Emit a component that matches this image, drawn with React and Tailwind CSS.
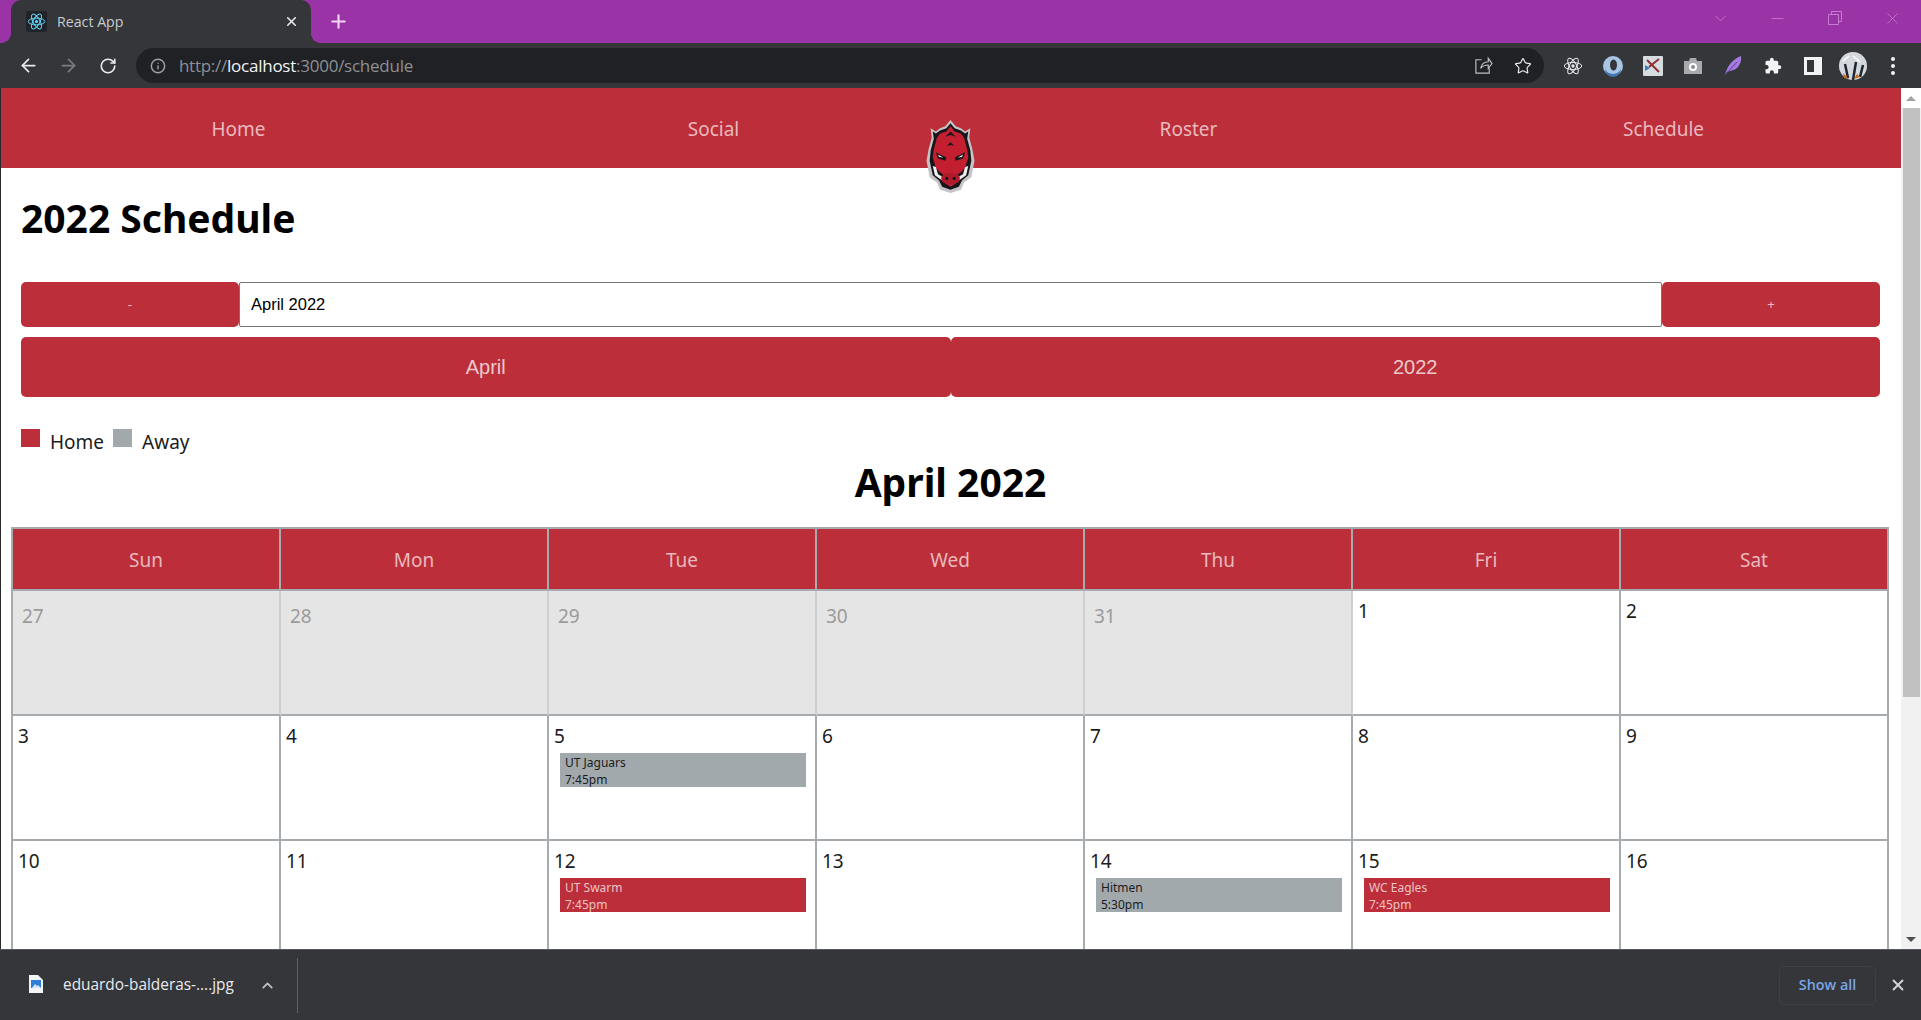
import { ArrowLeft, ArrowRight, ChevronDown, ChevronUp, Info, Minus, Plus, RotateCw, Star, X } from 'lucide-react'

const DAY_NAMES = ['Sun', 'Mon', 'Tue', 'Wed', 'Thu', 'Fri', 'Sat']

const WEEKS = [
  [
    { day: 27, muted: true },
    { day: 28, muted: true },
    { day: 29, muted: true },
    { day: 30, muted: true },
    { day: 31, muted: true },
    { day: 1 },
    { day: 2 },
  ],
  [
    { day: 3 },
    { day: 4 },
    { day: 5, game: { name: 'UT Jaguars', time: '7:45pm', home: false } },
    { day: 6 },
    { day: 7 },
    { day: 8 },
    { day: 9 },
  ],
  [
    { day: 10 },
    { day: 11 },
    { day: 12, game: { name: 'UT Swarm', time: '7:45pm', home: true } },
    { day: 13 },
    { day: 14, game: { name: 'Hitmen', time: '5:30pm', home: false } },
    { day: 15, game: { name: 'WC Eagles', time: '7:45pm', home: true } },
    { day: 16 },
  ],
]

function ReactIcon({ size = 22, color = '#61dafb' }) {
  return (
    <svg fill="none" height={size} stroke={color} strokeWidth="1.2" viewBox="0 0 24 24" width={size}>
      <circle cx="12" cy="12" fill={color} r="2" stroke="none" />
      <ellipse cx="12" cy="12" rx="10.5" ry="4.2" />
      <ellipse cx="12" cy="12" rx="10.5" ry="4.2" transform="rotate(60 12 12)" />
      <ellipse cx="12" cy="12" rx="10.5" ry="4.2" transform="rotate(120 12 12)" />
    </svg>
  )
}

function BoarLogo() {
  return (
    <svg height="73" viewBox="0 0 46 70" width="49">
      {/* grey outline */}
      <path d="M23 0l5 6 5 2 4 3 5-3-1 9 3 11 2 11-3 16-7 5-3 7-10 3-10-3-3-7-7-5-3-16 2-11 3-11-1-9 5 3 4-3 5-2z" fill="#c4c4c6" />
      {/* black body */}
      <path d="M23 3l4 5 6 2 4 3 3-2-1 7 3 11 1 10-3 14-6 5-3 6-8 3-8-3-3-6-6-5-3-14 1-10 3-11-1-7 3 2 4-3 6-2z" fill="#17171b" />
      {/* red face */}
      <path d="M23 6l4 5 6 2 3 4 3 11 1 8-3 10-4 4-3 2 1 7-8 5-8-5 1-7-3-2-4-4-3-10 1-8 3-11 3-4 6-2z" fill="#c41f30" />
      {/* forehead chevrons */}
      <path d="M23 11l5 5-5-1.500-5 1.500zM23 21l3.500 4-3.500-1-3.500 1z" fill="#17171b" />
      {/* brow and eyes */}
      <path d="M9 31l10 5-1 3-7-2zM37 31l-10 5 1 3 7-2z" fill="#17171b" />
      <path d="M11 33l5 3-4-.5zM35 33l-5 3 4-.5z" fill="#e6e6e6" />
      {/* tusks */}
      <path d="M6 44l2 9 7 5 1-3-5-3-2-7zM40 44l-2 9-7 5-1-3 5-3 2-7z" fill="#f0f0f0" />
      {/* snout */}
      <ellipse cx="23" cy="56" fill="#b01a2a" rx="9" ry="5.500" />
      <circle cx="19.500" cy="56" fill="#17171b" r="1.500" />
      <circle cx="26.500" cy="56" fill="#17171b" r="1.500" />
      <path d="M16 63q7 3 14 0" fill="none" stroke="#17171b" strokeWidth="1" />
    </svg>
  )
}

function ExtensionIcons() {
  return (
    <div className="flex items-center">
      <div className="flex w-10 justify-center">
        <ReactIcon color="#e8eaed" size={20} />
      </div>
      <div className="flex w-10 justify-center">
        <svg height="22" viewBox="0 0 22 22" width="22">
          <circle cx="11" cy="11" fill="#a8c6e4" r="10" />
          <ellipse cx="11.500" cy="10" fill="#35363a" rx="3.500" ry="5.500" />
          <path d="M3 14a9 9 0 0 0 16 0 8 8 0 0 1-16 0z" fill="#3f76b3" />
        </svg>
      </div>
      <div className="flex w-10 justify-center">
        <svg height="20" viewBox="0 0 20 20" width="20">
          <rect fill="#d5dde0" height="20" rx="1" width="20" />
          <path d="M4 4l12 12M16 3L6 11" fill="none" stroke="#8f2e36" strokeWidth="2" />
          <path d="M2 9l5 3-5 3z" fill="#3c7fb5" />
        </svg>
      </div>
      <div className="flex w-10 justify-center">
        <svg height="20" viewBox="0 0 20 20" width="20">
          <path d="M1 5h5l1-3h6l1 3h5v13H1z" fill="#a8aaad" />
          <circle cx="10" cy="11" fill="#fff" r="4" />
          <circle cx="10" cy="11" fill="#8a8c90" r="2" />
        </svg>
      </div>
      <div className="flex w-10 justify-center">
        <svg height="22" viewBox="0 0 22 22" width="22">
          <path d="M3 20C5 11 11 4 19 1c1 7-3 14-11 15l-3 1z" fill="#a67be0" />
          <path d="M3 20L15 7" stroke="#5b3c91" strokeWidth="1" />
        </svg>
      </div>
      <div className="flex w-10 justify-center">
        <svg fill="#f1f3f4" height="18" viewBox="0 0 24 24" width="18">
          <path d="M20.5 11H19V7a2 2 0 0 0-2-2h-4V3.500a2.500 2.500 0 0 0-5 0V5H4a2 2 0 0 0-2 2v3.800h1.500a2.700 2.700 0 0 1 0 5.400H2V20a2 2 0 0 0 2 2h3.800v-1.500a2.700 2.700 0 0 1 5.400 0V22H17a2 2 0 0 0 2-2v-4h1.500a2.500 2.500 0 0 0 0-5z" />
        </svg>
      </div>
      <div className="flex w-10 justify-center">
        <div className="flex h-[18px] w-[18px] justify-end border-[3px] border-[#f1f3f4] bg-[#35363a]">
          <div className="w-[5px] bg-[#f1f3f4]" />
        </div>
      </div>
      <div className="flex w-10 justify-center">
        <svg height="28" viewBox="0 0 28 28" width="28">
          <circle cx="14" cy="14" fill="#d3d8df" r="14" />
          <path d="M9 26L6 12M14 28l3-18M21 25l3-12" fill="none" stroke="#22262c" strokeWidth="2.500" />
          <path d="M4 21l6 6-5-1zM15 27l6-2-3-3z" fill="#c46a1c" />
          <path d="M4 9l6-5M14 4l7 6" fill="none" stroke="#f4f5f7" strokeWidth="2" />
        </svg>
      </div>
      <div className="flex w-10 flex-col items-center gap-[3px]">
        <span className="h-[4px] w-[4px] rounded-full bg-[#f1f3f4]" />
        <span className="h-[4px] w-[4px] rounded-full bg-[#f1f3f4]" />
        <span className="h-[4px] w-[4px] rounded-full bg-[#f1f3f4]" />
      </div>
    </div>
  )
}

function BrowserTop() {
  return (
    <div className="font-['Open_Sans',sans-serif]">
      <div className="flex h-[43px] items-end bg-[#9a33a5] pl-[11px]">
        <div className="relative flex h-[43px] w-[300px] items-center rounded-t-[10px] bg-[#35363a] pl-[15px] pr-[12px]">
          <span className="absolute bottom-0 left-[-10px] h-[10px] w-[10px] bg-[radial-gradient(circle_at_0_0,transparent_10px,#35363a_10px)]" />
          <span className="absolute bottom-0 right-[-10px] h-[10px] w-[10px] bg-[radial-gradient(circle_at_100%_0,transparent_10px,#35363a_10px)]" />
          <div className="flex h-[21px] w-[21px] items-center justify-center rounded-[3px] bg-[#20232a]">
            <ReactIcon size={19} />
          </div>
          <span className="ml-[10px] text-[14.2px] text-[#c9cbcf]">React App</span>
          <X className="ml-auto text-[#e8eaed]" size={15} strokeWidth={2.5} />
        </div>
        <div className="flex h-[43px] items-center pl-[17px]">
          <Plus className="text-[#f0d5f2]" size={21} strokeWidth={2.5} />
        </div>
        <div className="ml-auto flex h-[36px] items-center self-start text-[#c47fcc]">
          <ChevronDown size={19} strokeWidth={1} />
          <Minus className="ml-[38px]" size={19} strokeWidth={1} />
          <svg className="ml-[41px]" fill="none" height="14" stroke="currentColor" viewBox="0 0 14 14" width="14">
            <path d="M.5 3.500h10v10H.5zM3.500 3.500v-3h10v10h-3" />
          </svg>
          <X className="ml-[41px] mr-[19px]" size={19} strokeWidth={1} />
        </div>
      </div>
      <div className="flex h-[45px] items-center bg-[#35363a] pl-[8px] pr-[8px]">
        <div className="flex w-[122px] items-center text-[#e8eaed]">
          <div className="flex w-10 justify-center">
            <ArrowLeft size={21} strokeWidth={2} />
          </div>
          <div className="flex w-10 justify-center text-[#7b7c7f]">
            <ArrowRight size={21} strokeWidth={2} />
          </div>
          <div className="flex w-10 justify-center">
            <RotateCw size={18} strokeWidth={2.2} />
          </div>
        </div>
        <div className="ml-[6px] flex h-[35px] w-[1409px] items-center rounded-full bg-[#202124] pl-[14px] pr-[12px]">
          <Info className="text-[#9aa0a6]" size={16} strokeWidth={2.2} />
          <span className="ml-[13px] text-[17px] tracking-[-0.25px] text-[#8d9094]">
            http://<span className="text-[#f1f3f4]">localhost</span>:3000/schedule
          </span>
          <svg className="ml-auto text-[#bdc1c6]" fill="none" height="19" stroke="currentColor" strokeWidth="1.2" viewBox="0 0 20 20" width="19">
            <path d="M8 4H2v14h14v-5M7 13c1-5 4-7 8-7V2.500l4 5.500-4 5V9.500c-3 0-6 1-8 3.500z" />
          </svg>
          <Star className="ml-[21px] text-[#e8eaed]" size={18} strokeWidth={1.6} />
        </div>
        <div className="ml-[9px]">
          <ExtensionIcons />
        </div>
      </div>
    </div>
  )
}

function NavBar() {
  return (
    <nav className="relative grid h-[80px] grid-cols-4 bg-[#bc2f3a] pt-[3px] text-[19px] text-[#e9b9be]">
      <a className="flex items-center justify-center" href="#home">Home</a>
      <a className="flex items-center justify-center" href="#social">Social</a>
      <a className="flex items-center justify-center" href="#roster">Roster</a>
      <a className="flex items-center justify-center" href="#schedule">Schedule</a>
      <div className="absolute left-[925px] top-[32px]">
        <BoarLogo />
      </div>
    </nav>
  )
}

function DayCell({ cell }) {
  return (
    <div className={`h-[125px] border-b-2 border-r-2 border-b-[#a5abae] ${cell.muted ? 'border-r-[#ced1d2] bg-[#e5e5e5] pl-[9px] pt-[12px] text-[#9b9b9b]' : 'border-r-[#a5abae] bg-white pl-[5px] pt-[7px] text-[#1c1c1c]'}`}>
      <div className="text-[19px] leading-[26px]">{cell.day}</div>
      {cell.game && (
        <div className={`ml-[6px] mr-[9px] mt-[4px] h-[34px] pl-[5px] pt-[1px] text-[12px] leading-[17px] ${cell.game.home ? 'bg-[#bc2f3a] text-[#ecc3c7]' : 'bg-[#a2a9ad] text-[#1c1c1c]'}`}>
          <div>{cell.game.name}</div>
          <div>{cell.game.time}</div>
        </div>
      )}
    </div>
  )
}

function SchedulePage() {
  return (
    <div className="h-full min-w-0 flex-1 overflow-hidden border-l border-[#2a2a2a] bg-white">
      <NavBar />
      <div className="pl-[20px] pr-[21px]">
        <h1 className="mb-[14px] flex h-[100px] items-center text-[39px] font-bold text-black">2022 Schedule</h1>

        <div className="flex h-[45px] font-['Liberation_Sans',sans-serif]">
          <button className="w-[218px] rounded-[5px] bg-[#bc2f3a] text-[13px] text-[#e9b9be]" type="button">-</button>
          <input
            className="min-w-0 flex-1 rounded-[2px] border border-[#767676] pl-[11px] text-[16.5px] text-black"
            defaultValue="April 2022"
            readOnly
          />
          <button className="w-[218px] rounded-[5px] bg-[#bc2f3a] text-[13px] text-[#e9b9be]" type="button">+</button>
        </div>
        <div className="mt-[10px] flex h-[60px] font-['Liberation_Sans',sans-serif] text-[20px] text-[#ecc8cb]">
          <button className="flex-1 rounded-[5px] bg-[#bc2f3a]" type="button">April</button>
          <button className="flex-1 rounded-[5px] bg-[#bc2f3a]" type="button">2022</button>
        </div>

        <div className="mt-[32px] flex h-[29px] items-start text-[19px] text-[#1c1c1c]">
          <span className="h-[18px] w-[19px] bg-[#bc2f3a]" />
          <span className="ml-[10px] mr-[9px] leading-[26px]">Home</span>
          <span className="h-[18px] w-[19px] bg-[#a2a9ad]" />
          <span className="ml-[10px] leading-[26px]">Away</span>
        </div>
        <h2 className="mb-[21px] flex h-[48px] items-center justify-center text-[39px] font-bold text-black">April 2022</h2>
      </div>

      <div className="ml-[10px] mr-[12px] grid grid-cols-7 border-l-2 border-t-2 border-[#a5abae]">
        {DAY_NAMES.map((name) => (
          <div className="flex h-[62px] items-center justify-center border-b-2 border-r-2 border-[#a5abae] bg-[#bc2f3a] pt-[2px] text-[19px] text-[#e9b9be]" key={name}>
            {name}
          </div>
        ))}
        {WEEKS.flat().map((cell, index) => (
          <DayCell cell={cell} key={index} />
        ))}
      </div>
    </div>
  )
}

function ScrollBar() {
  return (
    <div className="flex h-full w-[20px] shrink-0 flex-col items-center bg-[#f1f1f1]">
      <div className="flex h-[20px] w-full items-center justify-center bg-white">
        <span className="h-0 w-0 border-x-[5px] border-b-[5px] border-x-transparent border-b-[#a3a3a3]" />
      </div>
      <div className="h-[589px] w-[17px] bg-[#c1c1c1]" />
      <div className="mt-auto flex h-[20px] w-full items-center justify-center">
        <span className="h-0 w-0 border-x-[5px] border-t-[5px] border-x-transparent border-t-[#505050]" />
      </div>
    </div>
  )
}

function DownloadBar() {
  return (
    <div className="flex h-[71px] shrink-0 items-center border-t border-[#55565a] bg-[#35363a] font-['Open_Sans',sans-serif]">
      <svg className="ml-[29px] mb-[3px]" height="18" viewBox="0 0 14 18" width="14">
        <path d="M0 0h9l5 5v13H0z" fill="#f1f3f4" />
        <rect fill="#2f7fd6" height="8" width="10" x="2" y="5" />
        <path d="M3 13l3-4 2 2 1-1 3 3z" fill="#d5e6f8" />
      </svg>
      <span className="ml-[20px] mb-[1px] text-[15.4px] text-[#e8eaed]">eduardo-balderas-....jpg</span>
      <ChevronUp className="ml-[25px] text-[#bdc1c6]" size={17} strokeWidth={2.5} />
      <div className="ml-[21px] h-[55px] w-px bg-[#5f6064]" />
      <button className="ml-auto flex h-[39px] w-[97px] items-center justify-center rounded-[5px] border border-[#3f4044] text-[14.3px] font-semibold text-[#7aa5e8]" type="button">
        Show all
      </button>
      <X className="ml-[13px] mr-[14px] text-[#d0d2d5]" size={18} strokeWidth={2.5} />
    </div>
  )
}

function App() {
  return (
    <div className="flex h-screen w-full flex-col overflow-hidden font-['Noto_Sans',sans-serif]">
      <BrowserTop />
      <div className="flex min-h-0 flex-1">
        <SchedulePage />
        <ScrollBar />
      </div>
      <DownloadBar />
    </div>
  )
}

export default App
